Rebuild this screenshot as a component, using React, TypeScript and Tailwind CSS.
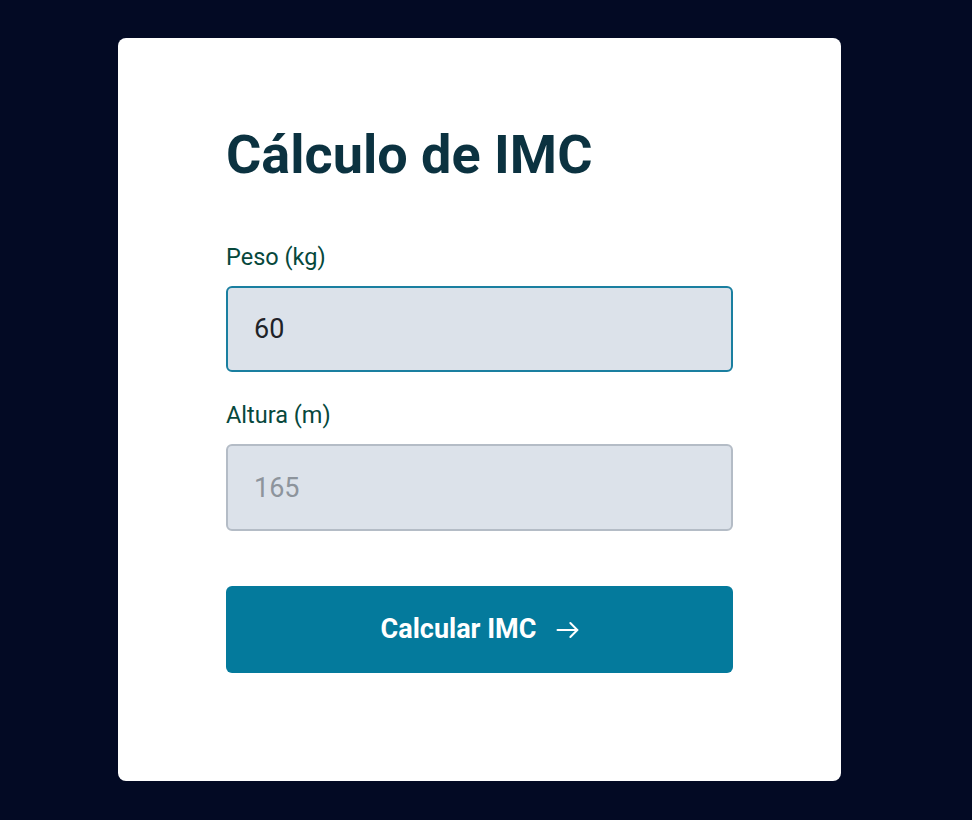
import { useState } from "react";

export default function App() {
  const [peso, setPeso] = useState("60");
  const [altura, setAltura] = useState("");

  return (
    <div className="min-h-screen w-full bg-[#030a24] pt-[38px] pb-[39px] font-['Roboto',sans-serif]">
      <div className="ml-[118px] w-[723px] h-[743px] bg-white rounded-lg px-[108px] pt-[90px]">
        <h1 className="text-[54px] leading-[1] font-bold text-[#0b3240]">Cálculo de IMC</h1>

        {/* FORM */}
        <div className="mt-[61px]">
          <label className="block text-[23.5px] leading-[28px] text-[#07483c] mb-[15px]">Peso (kg)</label>
          <input
            type="text"
            value={peso}
            onChange={(e) => setPeso(e.target.value)}
            className="w-full h-[86px] px-[26px] rounded-md bg-[#dce2ea] border-2 border-[#1a7fa0] text-[27px] text-[#1f2328] outline-none"
          />
        </div>

        <div className="mt-[29px]">
          <label className="block text-[23.5px] leading-[28px] text-[#07483c] mb-[15px]">Altura (m)</label>
          <input
            type="text"
            value={altura}
            placeholder="165"
            onChange={(e) => setAltura(e.target.value)}
            className="w-full h-[87px] px-[26px] rounded-md bg-[#dce2ea] border-2 border-[#b4bcc6] text-[27px] text-[#1f2328] placeholder:text-[#8d949c] outline-none"
          />
        </div>

        <button className="mt-[55px] w-full h-[87px] rounded-md bg-[#047a9c] text-white text-[27px] font-bold flex items-center justify-center gap-[18px] pl-[4px]">
          Calcular IMC
          <svg width="28" height="28" viewBox="0 0 24 24" fill="none" stroke="currentColor" strokeWidth="1.7" strokeLinecap="round" strokeLinejoin="round">
            <path d="M3 12h17" />
            <path d="M14 6l6 6-6 6" />
          </svg>
        </button>
      </div>
    </div>
  );
}
